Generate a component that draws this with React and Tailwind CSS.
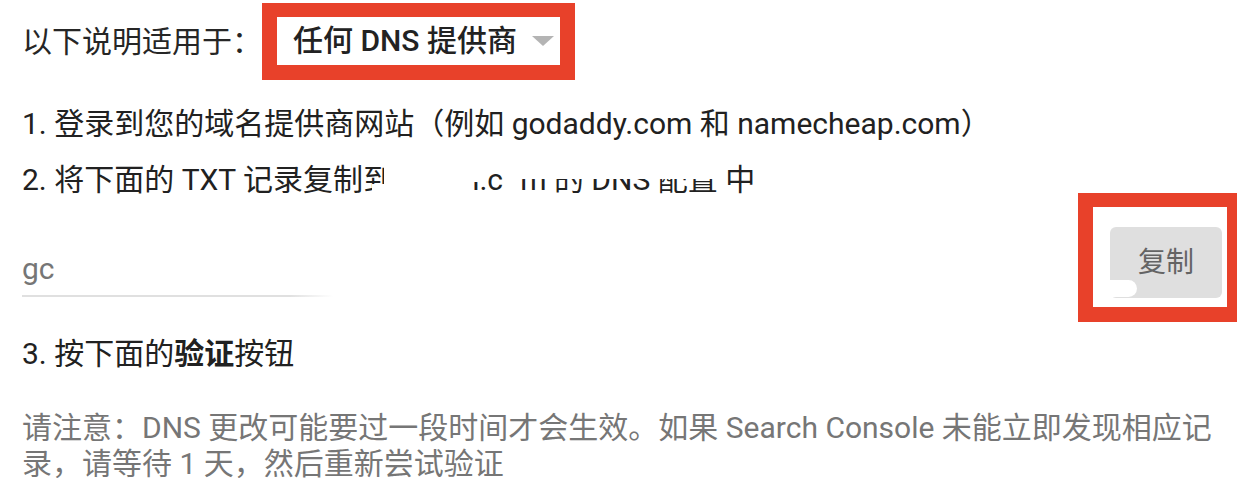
export default function App() {
  return (
    <div className="w-[1242px] h-[496px] bg-white overflow-hidden pl-[22px] pr-[5px] pt-[3px] font-['Roboto','Noto_Sans_CJK_SC',sans-serif] text-[30px] leading-[36px] text-[#212121]">
      {/* header row */}
      <div className="flex items-center h-[77px]">
        <span className="whitespace-nowrap text-[#262626]">以下说明适用于：</span>
        <div className="w-[313px] h-[77px] border-solid border-[#e8412a] border-l-[15px] border-r-[15px] border-t-[14px] border-b-[15px] flex items-center pl-[16px]">
          <span className="whitespace-nowrap font-medium text-[#222222]">任何 DNS 提供商</span>
          <span className="ml-[15px] w-0 h-0 border-solid border-l-[11px] border-r-[11px] border-t-[10px] border-l-transparent border-r-transparent border-t-[#b4b4b4]" />
        </div>
      </div>

      {/* step 1 */}
      <div className="mt-[26px] whitespace-nowrap">
        1. 登录到您的域名提供商网站（例如 godaddy.com 和 namecheap.com）
      </div>

      {/* step 2 */}
      <div className="mt-[20px] whitespace-nowrap flex items-start">
        <span>2. 将下面的 TXT 记录复制</span>
        <span className="relative">
          到
          <span className="absolute top-0 right-0 w-[30%] h-full bg-white" />
          <span className="absolute bottom-0 left-[30%] w-[40%] h-[14px] bg-white" />
        </span>
        <span className="inline-block w-[79px]" />
        <span className="relative">
          i.c
          <span className="absolute top-0 left-0 w-[10px] h-[20px] bg-white" />
        </span>
        <span className="text-transparent">o</span>
        <span className="relative">
          m 的 DNS 配置
          <span className="absolute top-0 left-0 w-full h-[17px] bg-white" />
        </span>
        <span>&nbsp;中</span>
      </div>

      {/* TXT field + copy button */}
      <div className="-mt-[5px] flex items-start">
        <div className="flex-1 pt-[58px]">
          <div className="h-[36px] text-[#767676] whitespace-nowrap">gc</div>
          <div className="mt-[8px] h-[2px] w-[311px] bg-[linear-gradient(to_right,#e0e0e0_86%,#ffffff)]" />
        </div>
        <div className="w-[159px] h-[129px] border-solid border-[#e8412a] border-l-[15px] border-r-[10px] border-t-[14px] border-b-[15px] pl-[17px] pt-[20px]">
          <div className="relative w-[112px] h-[71px] rounded-[6px] bg-[#dfdfdf] flex items-center justify-center text-[28px] text-[#646464]">
            复制
            <span className="absolute left-0 bottom-[1px] w-[27px] h-[17px] bg-white rounded-r-full" />
          </div>
        </div>
      </div>

      {/* step 3 */}
      <div className="mt-[14px] whitespace-nowrap">
        3. 按下面的<span className="font-bold">验证</span>按钮
      </div>

      {/* note */}
      <div className="mt-[38px] whitespace-nowrap text-[#767676]">
        请注意：DNS 更改可能要过一段时间才会生效。如果 Search Console 未能立即发现相应记
        <br />
        录，请等待 1 天，然后重新尝试验证
      </div>
    </div>
  );
}
